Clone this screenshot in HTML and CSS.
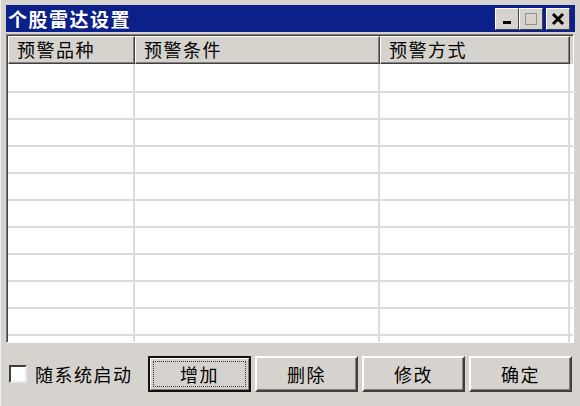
FILE: index.html
```html
<!DOCTYPE html>
<html lang="zh-CN">
<head>
<meta charset="utf-8">
<title>个股雷达设置</title>
<link rel="stylesheet" href="styles.css">
</head>
<body>
<div class="window">
  <div class="titlebar">
    <span class="title">个股雷达设置</span>
    <div class="caption-btns">
      <span class="cbtn"><svg width="14" height="14" viewBox="0 0 14 14"><rect x="3" y="9" width="8" height="3" fill="#000"/></svg></span>
      <span class="cbtn"><svg width="16" height="16" viewBox="0 0 16 16"><rect x="2.5" y="2.5" width="11" height="11" fill="none" stroke="#909090" stroke-width="1"/></svg></span>
      <span class="cbtn close"><svg width="16" height="16" viewBox="0 0 16 16"><path d="M3 3 L13 13 M13 3 L3 13" stroke="#000" stroke-width="3"/></svg></span>
    </div>
  </div>
  <div class="list">
    <div class="list-head">
      <div class="hcell c1">预警品种</div>
      <div class="hcell c2">预警条件</div>
      <div class="hcell c3">预警方式</div>
      <div class="hfill"></div>
    </div>
    <div class="rows">
      <div class="row"><div class="c1"></div><div class="c2"></div><div class="c3"></div></div>
      <div class="row"><div class="c1"></div><div class="c2"></div><div class="c3"></div></div>
      <div class="row"><div class="c1"></div><div class="c2"></div><div class="c3"></div></div>
      <div class="row"><div class="c1"></div><div class="c2"></div><div class="c3"></div></div>
      <div class="row"><div class="c1"></div><div class="c2"></div><div class="c3"></div></div>
      <div class="row"><div class="c1"></div><div class="c2"></div><div class="c3"></div></div>
      <div class="row"><div class="c1"></div><div class="c2"></div><div class="c3"></div></div>
      <div class="row"><div class="c1"></div><div class="c2"></div><div class="c3"></div></div>
      <div class="row"><div class="c1"></div><div class="c2"></div><div class="c3"></div></div>
      <div class="row"><div class="c1"></div><div class="c2"></div><div class="c3"></div></div>
      <div class="row"><div class="c1"></div><div class="c2"></div><div class="c3"></div></div>
    </div>
  </div>
  <div class="footer">
    <label class="check"><span class="box"></span><span class="check-label">随系统启动</span></label>
    <div class="buttons">
      <button class="btn default"><span class="focus">增加</span></button>
      <button class="btn">删除</button>
      <button class="btn">修改</button>
      <button class="btn">确定</button>
    </div>
  </div>
</div>
</body>
</html>
```
FILE: styles.css
```css
html, body {
  margin: 0;
  padding: 0;
  background: #e6e6e6;
}
body {
  width: 580px;
  height: 406px;
  overflow: hidden;
  font-family: "Noto Sans CJK SC", "Noto Sans", sans-serif;
}
.window {
  box-sizing: border-box;
  width: 580px;
  height: 406px;
  background: #d6d3ce;
  padding: 5px 5px 0 6px;
  border-left: 1px solid #f0f0f0;
  display: flex;
  flex-direction: column;
}
.titlebar {
  height: 27px;
  background: #0b2088;
  display: flex;
  align-items: center;
  justify-content: space-between;
  padding-left: 2px;
  margin-left: -1px;
}
.title {
  color: #fff;
  font-weight: bold;
  font-size: 19px;
  line-height: 27px;
  letter-spacing: 1.5px;
}
.caption-btns {
  display: flex;
  align-items: center;
  margin-right: 5px;
}
.cbtn {
  box-sizing: border-box;
  width: 24px;
  height: 22px;
  background: #d6d3ce;
  border: 1px solid;
  border-color: #fff #404040 #404040 #fff;
  display: flex;
  align-items: center;
  justify-content: center;
}
.cbtn.close {
  margin-left: 3px;
}
.list {
  margin-top: 2px;
  height: 309px;
  box-sizing: border-box;
  border: 1px solid;
  border-color: #808080 #ffffff #ffffff #808080;
  background: #fff;
  margin-left: -1px;
  margin-right: 1px;
  box-shadow: inset 1px 1px 0 #404040;
  padding: 1px 0 0 1px;
  overflow: hidden;
}
.list-head {
  display: flex;
  height: 28px;
}
.hcell {
  box-sizing: border-box;
  height: 28px;
  background: #d6d3ce;
  border: 1px solid;
  border-color: #ffffff #404040 #404040 #ffffff;
  box-shadow: inset -1px -1px 0 #808080;
  font-size: 18px;
  line-height: 24px;
  padding-left: 8px;
  letter-spacing: 1.5px;
  color: #000;
}
.hfill {
  flex: 1;
  background: #d6d3ce;
}
.c1 { width: 127px; }
.c2 { width: 245px; }
.c3 { width: 190px; }
.rows {
  height: 278px;
  overflow: hidden;
}
.row {
  display: flex;
  height: 27px;
  box-sizing: border-box;
  border-bottom: 2px solid #dcdcdc;
}
.row:first-child {
  height: 29px;
}
.row > div {
  box-sizing: border-box;
  border-right: 2px solid #dcdcdc;
}
.footer {
  flex: 1;
  display: flex;
  align-items: flex-start;
  justify-content: space-between;
  padding-top: 13px;
  padding-right: 3px;
}
.check {
  display: flex;
  align-items: center;
  height: 36px;
  margin-left: 2px;
}
.box {
  box-sizing: border-box;
  width: 18px;
  height: 18px;
  background: #fff;
  border: 2px solid;
  border-color: #404040 #e8e8e8 #e8e8e8 #404040;
  margin-right: 8px;
}
.check-label {
  font-size: 18px;
  color: #000;
  letter-spacing: 1.5px;
}
.buttons {
  display: flex;
  gap: 4px;
}
.btn {
  box-sizing: border-box;
  width: 103px;
  height: 36px;
  background: #d6d3ce;
  border: 2px solid;
  border-color: #fff #404040 #404040 #fff;
  box-shadow: inset -1px -1px 0 #808080;
  font-family: "Noto Sans CJK SC", sans-serif;
  font-size: 18px;
  letter-spacing: 1.5px;
  color: #000;
  padding: 0;
  display: flex;
  align-items: center;
  justify-content: center;
}
.btn.default {
  border: 2px solid #111;
  box-shadow: inset 1px 1px 0 #fff, inset -1px -1px 0 #808080;
  padding: 3px;
}
.focus {
  box-sizing: border-box;
  width: 100%;
  height: 100%;
  border: 1px dotted #333;
  display: flex;
  align-items: center;
  justify-content: center;
}
```
